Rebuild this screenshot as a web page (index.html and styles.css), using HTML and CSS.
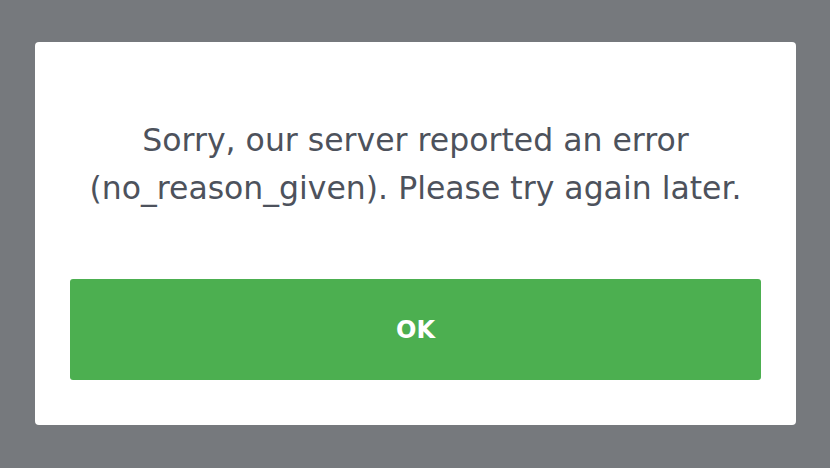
FILE: index.html
```
<!DOCTYPE html>
<html lang="en">
<head>
    <meta charset="UTF-8">
    <title>Error</title>
    <link rel="stylesheet" href="styles.css">
</head>
<body>
    <div class="dialog">
        <p class="message">Sorry, our server reported an error<br>(no_reason_given). Please try again later.</p>
        <button class="ok-button">OK</button>
    </div>
</body>
</html>
```
FILE: styles.css
```
body {
    margin: 0;
    height: 468px;
    background-color: #76797d;
    font-family: "DejaVu Sans", sans-serif;
    padding: 42px 35px 0 35px;
    box-sizing: border-box;
}

.dialog {
    width: 761px;
    height: 383px;
    background-color: #fff;
    border-radius: 4px;
    padding: 74px 35px 45px 35px;
    box-sizing: border-box;
    display: flex;
    flex-direction: column;
}

.message {
    margin: 0;
    color: #4d525c;
    font-size: 31.5px;
    line-height: 48px;
    text-align: center;
    flex: 1;
}

.ok-button {
    height: 101px;
    background-color: #4caf50;
    color: white;
    border: none;
    border-radius: 3px;
    font-family: "DejaVu Sans", sans-serif;
    font-size: 24px;
    font-weight: bold;
}
```
